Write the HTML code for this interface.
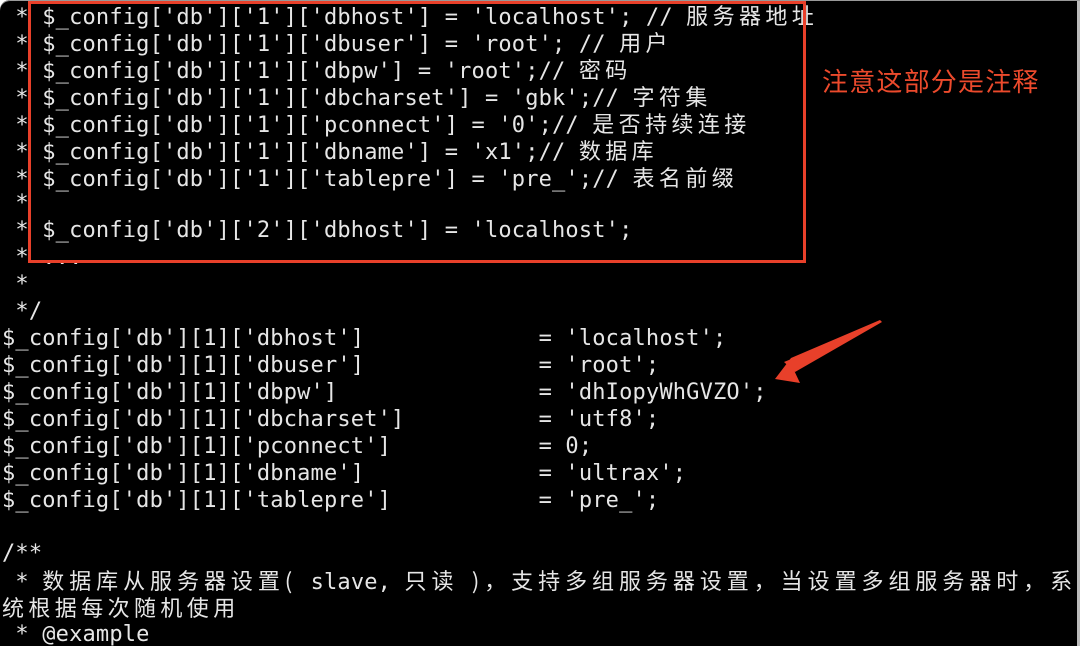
<!DOCTYPE html>
<html><head><meta charset="utf-8">
<style>
html,body{margin:0;padding:0;background:#fff;}
#t{position:relative;width:1080px;height:646px;background:#000;overflow:hidden;border-radius:10px 0 0 0;box-shadow:inset 0 1px 0 #999, inset -3px 0 0 #bbb;}
.l{position:absolute;left:2px;height:27px;line-height:27px;white-space:pre;color:#e6e6e6;font-family:"DejaVu Sans Mono","Liberation Mono","Noto Sans CJK SC",monospace;font-size:22px;letter-spacing:0.17px;}
.c{font-family:"Noto Sans CJK SC","WenQuanYi Zen Hei",sans-serif;letter-spacing:4.4px;font-size:22px;}
.c3{font-family:"Noto Sans CJK SC","WenQuanYi Zen Hei",sans-serif;letter-spacing:4.95px;font-size:22px;}
#box{position:absolute;left:28px;top:1px;width:772px;height:256px;border:3px solid #e8402a;}
#note{position:absolute;left:822px;top:63px;color:#ec4a2c;font-family:"Noto Sans CJK SC","WenQuanYi Zen Hei",sans-serif;font-size:26px;line-height:36px;letter-spacing:1.2px;}
</style></head><body>
<div id="t">
<div class="l" style="top:2px"> * $_config['db']['1']['dbhost'] = 'localhost'; // <span class="c">服务器地址</span></div>
<div class="l" style="top:29px"> * $_config['db']['1']['dbuser'] = 'root'; // <span class="c">用户</span></div>
<div class="l" style="top:56px"> * $_config['db']['1']['dbpw'] = 'root';// <span class="c">密码</span></div>
<div class="l" style="top:83px"> * $_config['db']['1']['dbcharset'] = 'gbk';// <span class="c">字符集</span></div>
<div class="l" style="top:110px"> * $_config['db']['1']['pconnect'] = '0';// <span class="c">是否持续连接</span></div>
<div class="l" style="top:137px"> * $_config['db']['1']['dbname'] = 'x1';// <span class="c">数据库</span></div>
<div class="l" style="top:164px"> * $_config['db']['1']['tablepre'] = 'pre_';// <span class="c">表名前缀</span></div>
<div class="l" style="top:190px"> *</div>
<div class="l" style="top:217px"> * $_config['db']['2']['dbhost'] = 'localhost';</div>
<div class="l" style="top:244px"> * ...</div>
<div class="l" style="top:271px"> *</div>
<div class="l" style="top:298px"> */</div>
<div class="l" style="top:325px">$_config['db'][1]['dbhost']             = 'localhost';</div>
<div class="l" style="top:352px">$_config['db'][1]['dbuser']             = 'root';</div>
<div class="l" style="top:379px">$_config['db'][1]['dbpw']               = 'dhIopyWhGVZO';</div>
<div class="l" style="top:406px">$_config['db'][1]['dbcharset']          = 'utf8';</div>
<div class="l" style="top:433px">$_config['db'][1]['pconnect']           = 0;</div>
<div class="l" style="top:460px">$_config['db'][1]['dbname']             = 'ultrax';</div>
<div class="l" style="top:487px">$_config['db'][1]['tablepre']           = 'pre_';</div>
<div class="l" style="top:540px">/**</div>
<div class="l" style="top:567px"> * <span class="c3">数据库从服务器设置(</span> slave, <span class="c3">只读</span> <span class="c3">)，支持多组服务器设置，当设置多组服务器时，系</span></div>
<div class="l" style="top:594px"><span class="c">统根据每次随机使用</span></div>
<div class="l" style="top:621px"> * @example</div>
<div id="box"></div>
<div id="note">注意这部分是注释</div>
<svg style="position:absolute;left:0;top:0" width="1080" height="646">
<polygon points="882,322 792,366 800,383 775,379 791,358 880,320" fill="#e8402a"/>
<polygon points="882,322 795,372 784,362" fill="#e8402a"/>
</svg>
</div>
</body></html>
